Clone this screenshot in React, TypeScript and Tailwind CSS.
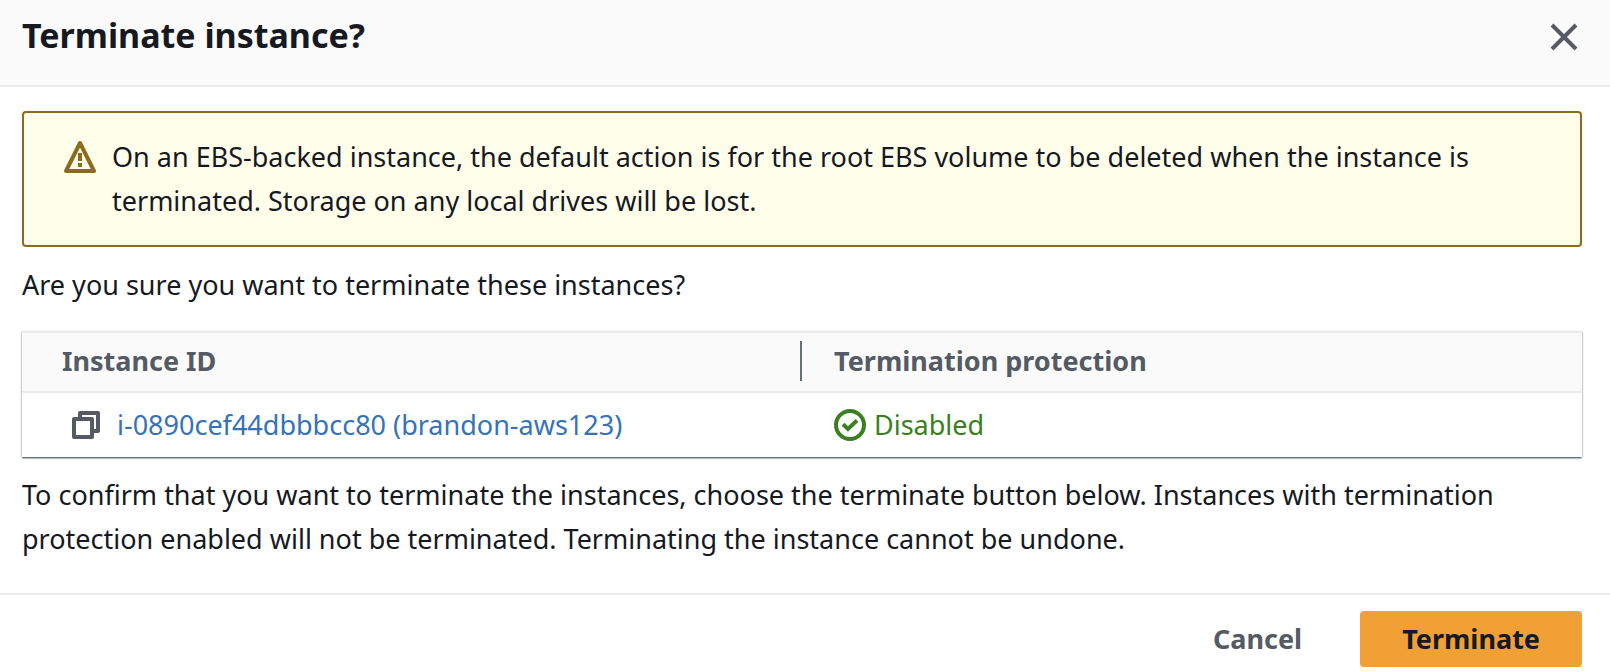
import { useState } from 'react';

type Instance = {
  id: string;
  name: string;
  protection: string;
};

const instances: Instance[] = [
  { id: 'i-0890cef44dbbbcc80', name: 'brandon-aws123', protection: 'Disabled' },
];

function CloseIcon() {
  return (
    <svg width="32" height="32" viewBox="0 0 16 16" fill="none" stroke="currentColor" strokeWidth="2" aria-hidden="true">
      <path d="M2 2l12 12M14 2L2 14" />
    </svg>
  );
}

function WarningIcon() {
  return (
    <svg width="32" height="32" viewBox="0 0 16 16" fill="none" stroke="currentColor" strokeWidth="2" aria-hidden="true">
      <path d="M8 1l7 14H1z" strokeLinejoin="round" />
      <path d="M8 6v4M8 11v2" />
    </svg>
  );
}

function CopyIcon() {
  return (
    <svg width="32" height="32" viewBox="0 0 16 16" fill="none" stroke="currentColor" strokeWidth="2" strokeLinejoin="round" aria-hidden="true">
      <path d="M2 5h9v9H2z" />
      <path d="M5 5V2h9v9h-3" />
    </svg>
  );
}

function SuccessIcon() {
  return (
    <svg width="32" height="32" viewBox="0 0 16 16" fill="none" stroke="currentColor" strokeWidth="2" aria-hidden="true">
      <circle cx="8" cy="8" r="7" />
      <path d="M4.5 7.6L7 10l4.5-4.3" />
    </svg>
  );
}

export default function App() {
  const [isOpen, setIsOpen] = useState<boolean>(true);
  const close = () => setIsOpen(false);

  if (!isOpen) return null;

  return (
    <div
      role="dialog"
      aria-labelledby="modal-title"
      className="w-full bg-white text-[#16191f] font-['Noto_Sans',sans-serif] text-[27px] leading-[44px]"
    >
      <header className="flex items-start justify-between bg-[#fafafa] border-b-2 border-[#ebebeb] pl-[22px] pr-[30px] pt-[11px] pb-[26px]">
        <h1 id="modal-title" className="text-[34px] leading-[48px] font-bold">
          Terminate instance?
        </h1>
        <button type="button" aria-label="Close" onClick={close} className="mt-[10px] text-[#545b64]">
          <CloseIcon />
        </button>
      </header>

      <main className="pl-[22px] pr-7 pt-6 pb-8">
        <div
          role="alert"
          className="flex gap-4 rounded border-2 border-[#8d6b1d] bg-[#fffeeb] px-10 py-[22px]"
        >
          <span className="shrink-0 pt-1.5 text-[#8d6b1d]">
            <WarningIcon />
          </span>
          <p>
            On an EBS-backed instance, the default action is for the root EBS volume to be deleted when the instance is
            terminated. Storage on any local drives will be lost.
          </p>
        </div>

        <p className="mt-4">Are you sure you want to terminate these instances?</p>

        <table className="mt-6 w-full table-fixed border-separate border-spacing-0 text-left shadow-[0_1px_2px_#687078,0_2px_1px_-1px_#687078]">
          <thead className="bg-[#fafafa] text-[#545b64]">
            <tr>
              <th scope="col" className="w-1/2 border-y-2 border-[#ebebeb] pt-1.5 pb-2 pl-10 font-bold">
                <div className="flex h-11 items-center justify-between">
                  Instance ID
                  <span className="h-10 w-0.5 bg-[#687078]" />
                </div>
              </th>
              <th scope="col" className="border-y-2 border-[#ebebeb] pt-1.5 pb-2 pl-8 font-bold">
                Termination protection
              </th>
            </tr>
          </thead>
          <tbody className="bg-white">
            {instances.map((instance) => (
              <tr key={instance.id}>
                <td className="py-[10px] pl-12">
                  <div className="flex items-center gap-[15px]">
                    <button type="button" aria-label="Copy instance ID" className="text-[#545b64]">
                      <CopyIcon />
                    </button>
                    <a href="#" className="text-[#3572b9]">
                      {instance.id} ({instance.name})
                    </a>
                  </div>
                </td>
                <td className="py-[10px] pl-8">
                  <div className="flex items-center gap-2 text-[#3a8020]">
                    <SuccessIcon />
                    {instance.protection}
                  </div>
                </td>
              </tr>
            ))}
          </tbody>
        </table>

        <p className="mt-4">
          To confirm that you want to terminate the instances, choose the terminate button below. Instances with
          termination protection enabled will not be terminated. Terminating the instance cannot be undone.
        </p>
      </main>

      <footer className="flex items-center justify-end gap-4 border-t-2 border-[#ebebeb] pr-7 pt-4 pb-[5px]">
        <button type="button" onClick={close} className="h-14 px-[42px] font-bold text-[#545b64]">
          Cancel
        </button>
        <button type="button" onClick={close} className="h-14 rounded bg-[#f1a035] px-[42px] font-bold">
          Terminate
        </button>
      </footer>
    </div>
  );
}
